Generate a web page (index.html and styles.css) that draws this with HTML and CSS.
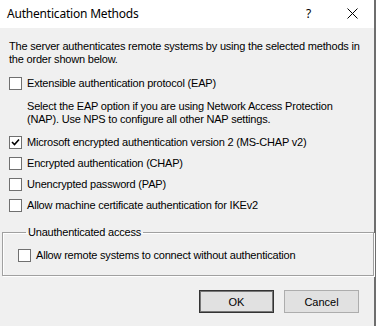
FILE: index.html
```html
<!DOCTYPE html>
<html lang="en">
<head>
    <meta charset="UTF-8">
    <title>Authentication Methods</title>
    <link rel="stylesheet" href="styles.css">
</head>
<body>
    <div class="window">
        <div class="title-bar">
            <span class="title">Authentication Methods</span>
            <span class="help">?</span>
            <svg class="close" width="11" height="11" viewBox="0 0 11 11">
                <path d="M0.5 0.5 L10.5 10.5 M10.5 0.5 L0.5 10.5" stroke="#000" stroke-width="1" fill="none"/>
            </svg>
        </div>

        <div class="content">
            <p class="intro">The server authenticates remote systems by using the selected methods in the order shown below.</p>

            <label class="check-row">
                <span class="box"></span>
                Extensible authentication protocol (EAP)
            </label>
            <p class="note">Select the EAP option if you are using Network Access Protection (NAP). Use NPS to configure all other NAP settings.</p>

            <div class="methods">
                <label class="check-row">
                    <span class="box checked">
                        <svg width="9" height="9" viewBox="0 0 9 9">
                            <path d="M1 4 L3.5 6.5 L8 1.5" stroke="#000" stroke-width="1.6" fill="none"/>
                        </svg>
                    </span>
                    Microsoft encrypted authentication version 2 (MS-CHAP v2)
                </label>
                <label class="check-row">
                    <span class="box"></span>
                    Encrypted authentication (CHAP)
                </label>
                <label class="check-row">
                    <span class="box"></span>
                    Unencrypted password (PAP)
                </label>
                <label class="check-row">
                    <span class="box"></span>
                    Allow machine certificate authentication for IKEv2
                </label>
            </div>

            <fieldset class="group">
                <legend>Unauthenticated access</legend>
                <label class="check-row">
                    <span class="box"></span>
                    Allow remote systems to connect without authentication
                </label>
            </fieldset>

            <div class="buttons">
                <button class="btn default">OK</button>
                <button class="btn">Cancel</button>
            </div>
        </div>
    </div>
</body>
</html>
```

FILE: styles.css
```css
html, body {
    margin: 0;
    padding: 0;
    background: #f0f0f0;
}

.window {
    width: 374px;
    height: 326px;
    background: #f0f0f0;
    border-right: 2px solid #6e6e6e;
    font-family: "Liberation Sans", Arial, sans-serif;
    font-size: 11px;
    letter-spacing: -0.2px;
    color: #000;
}

.title-bar {
    height: 28px;
    background: #fff;
    display: flex;
    align-items: center;
    padding-left: 7px;
}

.title {
    font-family: "Noto Sans", "Open Sans", sans-serif;
    font-size: 12px;
    letter-spacing: -0.2px;
    flex: 1;
    margin-top: -1px;
}

.help {
    font-family: "Noto Sans", sans-serif;
    font-size: 12px;
    margin-right: 36px;
    margin-top: -2px;
}

.close {
    margin-right: 16px;
    margin-top: -2px;
}

.content {
    padding: 12px 0 0 9px;
}

.intro, .note {
    margin: 0;
    line-height: 13px;
    width: 356px;
}

.note {
    padding-left: 18px;
    width: 340px;
    margin-top: 10px;
}

.check-row {
    display: flex;
    align-items: center;
    gap: 5px;
    height: 13px;
    line-height: 13px;
    white-space: nowrap;
}

.intro + .check-row {
    margin-top: 11px;
}

.box {
    width: 11px;
    height: 11px;
    border: 1px solid #707070;
    background: #fff;
    display: flex;
    align-items: center;
    justify-content: center;
    flex-shrink: 0;
}

.methods {
    display: flex;
    flex-direction: column;
    gap: 8px;
    margin-top: 10px;
}

.group {
    margin: 14px 0 0 -7px;
    width: 355px;
    padding: 10px 0 13px 15px;
    border: 1px solid #a0a0a0;
    box-shadow: 1px 1px 0 #fff, inset 1px 1px 0 #fff;
    min-width: 0;
}

.group legend {
    padding: 0 2px;
    margin-left: 8px;
    line-height: 13px;
}

.buttons {
    display: flex;
    justify-content: flex-end;
    gap: 10px;
    margin-top: 14px;
    padding-right: 15px;
}

.btn {
    width: 75px;
    height: 23px;
    background: #e1e1e1;
    border: 1px solid #adadad;
    font-family: "Liberation Sans", Arial, sans-serif;
    font-size: 11px;
    color: #000;
    padding: 0;
}

.btn.default {
    border: 1px solid #333;
    box-shadow: inset 0 0 0 1px #777;
}
```
